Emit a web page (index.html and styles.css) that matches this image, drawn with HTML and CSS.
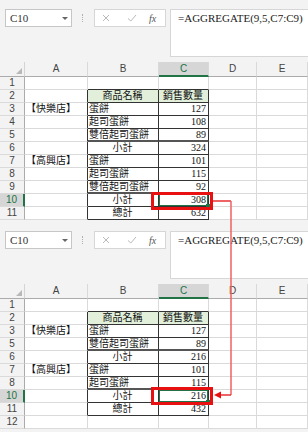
FILE: index.html
```html
<!DOCTYPE html>
<html lang="zh-Hant">
<head>
    <meta charset="UTF-8">
    <title>AGGREGATE 小計</title>
    <link rel="stylesheet" href="styles.css">
</head>
<body>
<div class="page">

    <!-- before filtering -->
    <div class="sheet">
        <div class="toolbar">
            <div class="namebox"><span>C10</span><span class="caret"></span></div>
            <div class="grip"></div>
            <div class="fnbox">
                <svg class="ic-x" width="8" height="8" viewBox="0 0 8 8"><path d="M1 1L7 7M7 1L1 7" stroke="#b9b9b9" stroke-width="1"/></svg>
                <svg class="ic-ok" width="10" height="8" viewBox="0 0 10 8"><path d="M1 4.5L3.8 7L9 1" fill="none" stroke="#b9b9b9" stroke-width="1"/></svg>
                <span class="fx">fx</span>
            </div>
            <div class="formula">=AGGREGATE(9,5,C7:C9)</div>
        </div>
        <div class="grid">
            <div class="corner"><span class="tri"></span></div>
            <div class="ch">A</div><div class="ch">B</div><div class="ch sel-c">C</div><div class="ch">D</div><div class="ch">E</div>

            <div class="rh">1</div><div class="c"></div><div class="c ab"></div><div class="c ab"></div><div class="c"></div><div class="c"></div>
            <div class="rh">2</div><div class="c ed"></div><div class="c t hd">商品名稱</div><div class="c t hd">銷售數量</div><div class="c"></div><div class="c"></div>
            <div class="rh">3</div><div class="c ed">【快樂店】</div><div class="c t">蛋餅</div><div class="c t num">127</div><div class="c"></div><div class="c"></div>
            <div class="rh">4</div><div class="c ed"></div><div class="c t">起司蛋餅</div><div class="c t num">108</div><div class="c"></div><div class="c"></div>
            <div class="rh">5</div><div class="c ed"></div><div class="c t dbl">雙倍起司蛋餅</div><div class="c t dbl num">89</div><div class="c"></div><div class="c"></div>
            <div class="rh">6</div><div class="c ed"></div><div class="c t mid">小計</div><div class="c t num">324</div><div class="c"></div><div class="c"></div>
            <div class="rh">7</div><div class="c ed">【高興店】</div><div class="c t">蛋餅</div><div class="c t num">101</div><div class="c"></div><div class="c"></div>
            <div class="rh">8</div><div class="c ed"></div><div class="c t">起司蛋餅</div><div class="c t num">115</div><div class="c"></div><div class="c"></div>
            <div class="rh">9</div><div class="c ed"></div><div class="c t dbl">雙倍起司蛋餅</div><div class="c t dbl num">92</div><div class="c"></div><div class="c"></div>
            <div class="rh sel-r">10</div><div class="c ed"></div><div class="c t mid">小計</div><div class="c t num act">308</div><div class="c"></div><div class="c"></div>
            <div class="rh">11</div><div class="c ed"></div><div class="c t mid">總計</div><div class="c t num">632</div><div class="c"></div><div class="c"></div>
        </div>
    </div>

    <!-- after filtering: rows 4 and 9 hidden -->
    <div class="sheet">
        <div class="toolbar">
            <div class="namebox"><span>C10</span><span class="caret"></span></div>
            <div class="grip"></div>
            <div class="fnbox">
                <svg class="ic-x" width="8" height="8" viewBox="0 0 8 8"><path d="M1 1L7 7M7 1L1 7" stroke="#b9b9b9" stroke-width="1"/></svg>
                <svg class="ic-ok" width="10" height="8" viewBox="0 0 10 8"><path d="M1 4.5L3.8 7L9 1" fill="none" stroke="#b9b9b9" stroke-width="1"/></svg>
                <span class="fx">fx</span>
            </div>
            <div class="formula">=AGGREGATE(9,5,C7:C9)</div>
        </div>
        <div class="grid">
            <div class="corner"><span class="tri"></span></div>
            <div class="ch">A</div><div class="ch">B</div><div class="ch sel-c">C</div><div class="ch">D</div><div class="ch">E</div>

            <div class="rh">1</div><div class="c"></div><div class="c ab"></div><div class="c ab"></div><div class="c"></div><div class="c"></div>
            <div class="rh">2</div><div class="c ed"></div><div class="c t hd">商品名稱</div><div class="c t hd">銷售數量</div><div class="c"></div><div class="c"></div>
            <div class="rh">3</div><div class="c ed">【快樂店】</div><div class="c t">蛋餅</div><div class="c t num">127</div><div class="c"></div><div class="c"></div>
            <div class="rh">5</div><div class="c ed"></div><div class="c t dbl">雙倍起司蛋餅</div><div class="c t dbl num">89</div><div class="c"></div><div class="c"></div>
            <div class="rh">6</div><div class="c ed"></div><div class="c t mid">小計</div><div class="c t num">216</div><div class="c"></div><div class="c"></div>
            <div class="rh">7</div><div class="c ed">【高興店】</div><div class="c t">蛋餅</div><div class="c t num">101</div><div class="c"></div><div class="c"></div>
            <div class="rh">8</div><div class="c ed"></div><div class="c t dbl">起司蛋餅</div><div class="c t dbl num">115</div><div class="c"></div><div class="c"></div>
            <div class="rh sel-r">10</div><div class="c ed"></div><div class="c t mid">小計</div><div class="c t num act">216</div><div class="c"></div><div class="c"></div>
            <div class="rh">11</div><div class="c ed"></div><div class="c t mid">總計</div><div class="c t num">432</div><div class="c"></div><div class="c"></div>
            <div class="rh">12</div><div class="c"></div><div class="c"></div><div class="c"></div><div class="c"></div><div class="c"></div>
        </div>
    </div>

    <!-- red callout drawn over both screenshots -->
    <svg class="marks" width="308" height="432" viewBox="0 0 308 432">
        <rect x="152.5" y="193.5" width="59" height="15" fill="none" stroke="#e81010" stroke-width="3"/>
        <rect x="152.5" y="388.5" width="59" height="15" fill="none" stroke="#e81010" stroke-width="3"/>
        <path d="M213 201H231" stroke="#e83030" stroke-width="1.5"/>
        <path d="M231 201V395" stroke="#f06060" stroke-opacity="0.75" stroke-width="2"/>
        <path d="M231 395H220" stroke="#e83030" stroke-width="1.5"/>
        <polygon points="214,395 221,391.5 221,398.5" fill="#e81010"/>
    </svg>
</div>
</body>
</html>
```
FILE: styles.css
```css
* {
    box-sizing: border-box;
}
body {
    margin: 0;
    width: 308px;
    height: 432px;
    overflow: hidden;
    background: #f3f3f3;
    font-family: "Liberation Sans", Arial, sans-serif;
    color: #222;
}
.page {
    position: relative;
    width: 308px;
    height: 432px;
}
.sheet {
    display: flex;
    flex-direction: column;
}
.sheet + .sheet {
    margin-top: 2px;
}

/* formula bar */
.toolbar {
    height: 62px;
    display: flex;
    align-items: flex-start;
    padding: 9px 0 0 5px;
}
.namebox {
    width: 67px;
    height: 18px;
    background: #fff;
    border: 1px solid #c6c6c6;
    display: flex;
    align-items: center;
    justify-content: space-between;
    padding: 0 3px 0 4px;
    font: 11px "Liberation Serif", serif;
    color: #333;
}
.caret {
    width: 0;
    height: 0;
    border-left: 3px solid transparent;
    border-right: 3px solid transparent;
    border-top: 3px solid #666;
}
.grip {
    width: 2px;
    height: 8px;
    margin: 5px 0 0 10px;
    border-left: 1px dotted #b0b0b0;
}
.fnbox {
    width: 72px;
    height: 18px;
    margin-left: 10px;
    background: #fff;
    border: 1px solid #d6d6d6;
    display: flex;
    align-items: center;
}
.ic-x {
    margin-left: 7px;
}
.ic-ok {
    margin-left: 17px;
}
.fx {
    margin-left: 12px;
    font: italic 10px "Liberation Serif", serif;
    color: #555;
}
.formula {
    flex: 1;
    margin-left: 4px;
    height: 48px;
    background: #fff;
    border: 1px solid #d6d6d6;
    border-right: none;
    padding: 2px 0 0 7px;
    font: 11px "Liberation Serif", serif;
    color: #222;
    white-space: nowrap;
}

/* sheet grid */
.grid {
    display: grid;
    grid-template-columns: 25px 63px 71px 50px 48px 51px;
    grid-template-rows: 15px;
    grid-auto-rows: 13px;
    background: #fff;
}
.corner {
    background: #f3f3f3;
    border-right: 1px solid #d4d4d4;
    border-bottom: 1px solid #ababab;
    display: flex;
    align-items: flex-end;
    justify-content: flex-end;
    padding: 0 2px 2px 0;
}
.tri {
    width: 0;
    height: 0;
    border-left: 6px solid transparent;
    border-bottom: 6px solid #b8b8b8;
}
.ch {
    background: #f3f3f3;
    border-right: 1px solid #d9d9d9;
    border-bottom: 1px solid #ababab;
    font-size: 10px;
    line-height: 14px;
    text-align: center;
    color: #444;
}
.rh {
    background: #f3f3f3;
    border-right: 1px solid #ababab;
    border-bottom: 1px solid #dadada;
    font-size: 10px;
    line-height: 12px;
    text-align: center;
    color: #444;
}
.sel-c {
    background: #d6d6d6;
    color: #217346;
    border-bottom: 2px solid #217346;
}
.sel-r {
    background: #d6d6d6;
    color: #217346;
    border-right: 2px solid #217346;
}
.c {
    border-right: 1px solid #dadada;
    border-bottom: 1px solid #dadada;
    padding: 0 2px 0 1px;
    font-family: "Liberation Serif", "Noto Sans CJK TC", serif;
    font-size: 10px;
    line-height: 12px;
    white-space: nowrap;
    overflow: hidden;
    color: #111;
}
.ab {
    border-bottom-color: #333;
}
.ed {
    border-right-color: #333;
}
.t {
    border-right-color: #333;
    border-bottom-color: #333;
}
.hd {
    background: #e2efda;
    text-align: center;
}
.num {
    text-align: right;
}
.mid {
    text-align: center;
}
.dbl {
    border-bottom: 2px solid #555;
    line-height: 11px;
}
.act {
    position: relative;
    overflow: visible;
    box-shadow: inset 0 0 0 1px #217346;
}
.act::after {
    content: "";
    position: absolute;
    right: -2px;
    bottom: -2px;
    width: 4px;
    height: 4px;
    background: #217346;
}

/* annotation layer */
.marks {
    position: absolute;
    top: 0;
    left: 0;
    pointer-events: none;
}
```
